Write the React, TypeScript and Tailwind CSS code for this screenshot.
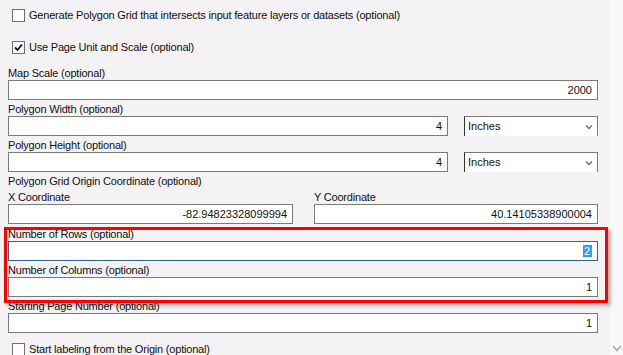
import React from "react";

const font = { fontFamily: '"Liberation Sans", Arial, sans-serif' };

function CheckBox({ checked }: { checked?: boolean }) {
  return (
    <div className="w-[13px] h-[13px] border border-[#707070] bg-[#fdfdfd] flex items-center justify-center shrink-0">
      {checked && (
        <svg width="9" height="9" viewBox="0 0 9 9">
          <path d="M1 4.5 L3.5 7 L8 1.5" stroke="#111" strokeWidth="1.8" fill="none" />
        </svg>
      )}
    </div>
  );
}

function CheckRow({ label, checked, className }: { label: string; checked?: boolean; className?: string }) {
  return (
    <div className={"flex items-center h-[13px] pl-[4px] " + (className || "")}>
      <CheckBox checked={checked} />
      <span className="ml-[4px] text-[11px] leading-[13px] tracking-[-0.2px] text-[#111]">{label}</span>
    </div>
  );
}

function Label({ text }: { text: string }) {
  return (
    <div className="h-[16px] pt-[3px] text-[11px] leading-[13px] tracking-[-0.2px] text-[#111] whitespace-nowrap">
      {text}
    </div>
  );
}

function Input({ value, className, focused }: { value?: string; className?: string; focused?: boolean }) {
  return (
    <div
      className={
        "h-[20px] bg-white border flex items-center justify-end pr-[5px] text-[11px] text-[#111] " +
        (focused ? "border-[#2f6697] " : "border-[#7a7a7a] ") +
        (className || "")
      }
    >
      {focused ? (
        <span className="flex items-center">
          <span className="bg-[#3399ff] text-white leading-[12px] px-[0.5px]">{value}</span>
          <span className="w-[1.5px] h-[12px] bg-[#e07020]" />
        </span>
      ) : (
        value
      )}
    </div>
  );
}

function Select({ value }: { value: string }) {
  return (
    <div className="w-[134px] h-[20px] bg-white border-t border-r border-[#7a7a7a] border-l border-l-[#333] flex items-center justify-between pl-[3px] pr-[4px] text-[11px] text-[#111]">
      <span>{value}</span>
      <svg width="8" height="6" viewBox="0 0 8 6">
        <path d="M1 1.5 L4 4.5 L7 1.5" stroke="#6a6a6a" strokeWidth="1.3" fill="none" />
      </svg>
    </div>
  );
}

export default function App() {
  return (
    <div className="relative w-[623px] h-[355px] overflow-hidden bg-[#f5f2f5] flex" style={font}>
      <div className="flex-1 pl-[8px] pr-[12px]">
        <CheckRow className="mt-[9px]" label="Generate Polygon Grid that intersects input feature layers or datasets (optional)" />
        <CheckRow className="mt-[19px]" checked label="Use Page Unit and Scale (optional)" />
        <div className="mt-[10px]">
          <Label text="Map Scale (optional)" />
          <Input value="2000" />
          <Label text="Polygon Width (optional)" />
          <div className="flex gap-[16px]">
            <Input value="4" className="flex-1" />
            <Select value="Inches" />
          </div>
          <Label text="Polygon Height (optional)" />
          <div className="flex gap-[16px]">
            <Input value="4" className="flex-1" />
            <Select value="Inches" />
          </div>
          <Label text="Polygon Grid Origin Coordinate (optional)" />
          <div className="grid grid-cols-[285px_1fr] gap-x-[21px]">
            <Label text="X Coordinate" />
            <Label text="Y Coordinate" />
            <Input value="-82.94823328099994" />
            <Input value="40.14105338900004" />
          </div>
          <div className="mt-[1px]">
            <Label text="Number of Rows (optional)" />
            <Input value="2" focused />
            <Label text="Number of Columns (optional)" />
            <Input value="1" />
            <Label text="Starting Page Number (optional)" />
            <Input value="1" />
          </div>
        </div>
        <CheckRow className="mt-[10px]" label="Start labeling from the Origin (optional)" />
      </div>
      <div className="w-[13px] bg-[#faf9fa] flex flex-col justify-end items-center pb-[3px]">
        <svg width="10" height="7" viewBox="0 0 10 7">
          <path d="M1 1 L5 5.5 L9 1" stroke="#a8a8a8" strokeWidth="1.5" fill="none" />
        </svg>
      </div>
      <div className="absolute left-[4px] top-[227px] w-[604px] h-[76px] border-[3px] border-[#ff0000] shadow-[3px_3px_3px_rgba(0,0,0,0.25)] pointer-events-none" />
    </div>
  );
}
